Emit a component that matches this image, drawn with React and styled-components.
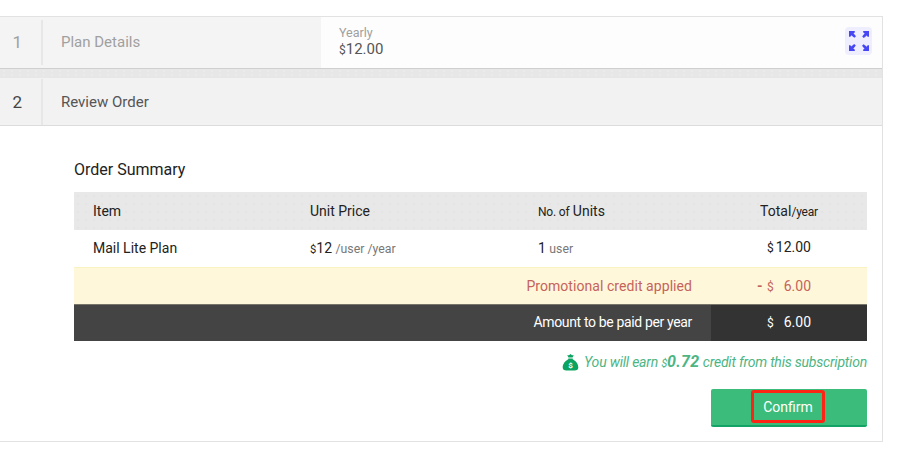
import React from 'react';
import styled, { createGlobalStyle, css } from 'styled-components';

const GlobalStyle = createGlobalStyle`
  * {
    box-sizing: border-box;
  }

  body {
    margin: 0;
    background: #fff;
    color: #222;
    font-family: Roboto, 'Liberation Sans', sans-serif;
    font-size: 14px;
  }
`;

export default function App() {
  return (
    <>
      <GlobalStyle />
      <Panel>
        <Step first>
          <StepNumber muted>1</StepNumber>
          <StepTitle muted>Plan Details</StepTitle>
          <PlanInfo>
            <PlanText>
              <Period>Yearly</Period>
              <Price><Currency>$</Currency>12.00</Price>
            </PlanText>
            <ExpandButton><ExpandIcon /></ExpandButton>
          </PlanInfo>
        </Step>
        <Gap />
        <Step>
          <StepNumber>2</StepNumber>
          <StepTitle>Review Order</StepTitle>
        </Step>
        <Content>
          <Heading>Order Summary</Heading>
          <Row head>
            <Cell>Item</Cell>
            <Cell>Unit Price</Cell>
            <Cell><Small>No. of</Small> Units</Cell>
            <TotalCell>Total<Small>/year</Small></TotalCell>
          </Row>
          <Row>
            <Cell>Mail Lite Plan</Cell>
            <Cell><Currency>$</Currency>12 <Unit>/user /year</Unit></Cell>
            <Cell>1 <Unit>user</Unit></Cell>
            <TotalCell><Sign>$</Sign><Amount>12.00</Amount></TotalCell>
          </Row>
          <Row promo>
            <LabelCell>Promotional credit applied</LabelCell>
            <TotalCell><Minus>-</Minus><Sign>$</Sign><Amount>6.00</Amount></TotalCell>
          </Row>
          <Row due>
            <LabelCell compact>Amount to be paid per year</LabelCell>
            <TotalCell dark><Sign>$</Sign><Amount>6.00</Amount></TotalCell>
          </Row>
          <Earning>
            <MoneyBag />
            <EarningText>
              You will earn <Currency>$</Currency><b>0.72</b> credit from this subscription
            </EarningText>
          </Earning>
          <ConfirmButton><Highlight>Confirm</Highlight></ConfirmButton>
        </Content>
      </Panel>
    </>
  );
}

function ExpandIcon() {
  return (
    <svg width="20" height="20" viewBox="0 0 20 20" fill="#4646f5">
      {[0, 90, 180, 270].map(angle => (
        <path
          key={angle}
          transform={`rotate(${angle} 10 10)`}
          d="M0 0h5.800v1.400L4.500 2.200 7 5.200 5.400 6.800 2.200 4.300 1.400 5.800H0z"
        />
      ))}
    </svg>
  );
}

function MoneyBag() {
  return (
    <svg width="17" height="17" viewBox="0 0 17 17">
      <path d="M5.200 1.200 7 1.300 8.500 0 10 1.300l1.800-.1-1.300 2.300h-4z" fill="#0ba360" />
      <path d="M6.300 4.400h4.400v.9c3 1.500 5.600 4.700 5.600 8 0 2.200-1.300 3.300-3.700 3.300H4.400C2 16.600.700 15.500.700 13.300c0-3.300 2.600-6.500 5.600-8z" fill="#0ba360" />
      <text x="8.500" y="13.800" textAnchor="middle" fontSize="8" fontWeight="700" fill="#fff">$</text>
    </svg>
  );
}

const Panel = styled.div`
  width: 883px;
  height: 426px;
  margin-top: 16px;
  border: solid #e2e2e2;
  border-width: 1px 1px 1px 0;
`;

const Step = styled.div.withConfig({ shouldForwardProp: p => p !== 'first' })`
  display: flex;
  align-items: stretch;
  height: ${p => (p.first ? 52 : 48)}px;
  padding: ${p => (p.first ? '3px 0' : '1px 0 0')};
  background: ${p => (p.first ? '#f4f4f4' : '#f2f2f2')};
  border-bottom: 1px solid ${p => (p.first ? '#cfcfcf' : '#dcdcdc')};
`;

const StepNumber = styled.div.withConfig({ shouldForwardProp: p => p !== 'muted' })`
  display: flex;
  align-items: center;
  width: 43px;
  padding-left: 12.500px;
  padding-bottom: ${p => (p.muted ? 2 : 0)}px;
  border-right: 2px solid #e7e7e7;
  color: ${p => (p.muted ? '#a0a0a0' : '#444')};
  font-size: 17px;
`;

const StepTitle = styled.div.withConfig({ shouldForwardProp: p => p !== 'muted' })`
  display: flex;
  align-items: center;
  width: 278px;
  padding-left: 18px;
  padding-bottom: ${p => (p.muted ? 2 : 0)}px;
  color: ${p => (p.muted ? '#a0a0a0' : '#555')};
  font-size: 15px;
`;

const PlanInfo = styled.div`
  display: flex;
  flex: 1;
  align-items: center;
  justify-content: space-between;
  margin: -3px 0;
  padding: 0 10px 0 18px;
  background: #fdfdfd;
`;

const PlanText = styled.div`
  padding-bottom: 3px;
  line-height: 16px;
`;

const Period = styled.div`
  color: #a0a0a0;
  font-size: 12.500px;
`;

const Price = styled.div`
  color: #555;
  font-size: 15px;
`;

const Currency = styled.span`
  font-size: 0.800em;
`;

const ExpandButton = styled.div`
  display: flex;
  align-items: center;
  justify-content: center;
  width: 27px;
  height: 28px;
  margin-bottom: 4px;
  border-radius: 4px;
  background: #eeeefe;
`;

const Gap = styled.div`
  height: 9px;
  background: radial-gradient(circle, #ececec 0.500px, transparent 1px) 0 0 / 8px 4px #e7e7e7;
`;

const Content = styled.div`
  display: flex;
  flex-direction: column;
  padding: 32px 15px 0 74px;
`;

const Heading = styled.div`
  height: 34px;
  font-size: 16px;
  line-height: 23px;
`;

const flags = ['head', 'promo', 'due', 'dark', 'compact'];

const Row = styled.div.withConfig({ shouldForwardProp: p => !flags.includes(p) })`
  display: grid;
  grid-template-columns: 217px 228px 192px 156px;
  width: 793px;
  height: 37px;
  line-height: 37px;

  ${p => p.head && css`
    height: 38px;
    line-height: 38px;
    background: radial-gradient(circle, #e0e0e0 0.500px, transparent 1px) 0 0 / 8px 8px #e8e8e8;
  `}

  ${p => p.promo && css`
    border-top: 1px solid #f8f3c0;
    background: #fff7d9;
    color: #c4635c;
  `}

  ${p => p.due && css`
    line-height: 35px;
    border-top: 1px solid #77746a;
    background: #444;
    color: #fff;
  `}
`;

const Cell = styled.div`
  padding-left: 19px;
  white-space: nowrap;
`;

const LabelCell = styled.div.withConfig({ shouldForwardProp: p => !flags.includes(p) })`
  grid-column: 1 / 4;
  padding-right: 19px;
  letter-spacing: ${p => (p.compact ? -0.350 : 0.060)}px;
  text-align: right;
`;

const TotalCell = styled.div.withConfig({ shouldForwardProp: p => !flags.includes(p) })`
  display: flex;
  align-items: baseline;
  justify-content: center;
  background: ${p => (p.dark ? '#333' : 'none')};
`;

const Small = styled.span`
  font-size: 12px;
  letter-spacing: -0.200px;
`;

const Unit = styled.span`
  color: #777;
  font-size: 12.300px;
`;

const Minus = styled.span`
  width: 10px;
  margin-left: -10px;
  font-weight: 700;
`;

const Sign = styled.span`
  width: 8px;
  font-size: 12px;
  line-height: 35px;
`;

const Amount = styled.span`
  width: 36px;
  line-height: 35px;
  text-align: right;
`;

const Earning = styled.div`
  display: flex;
  align-items: center;
  justify-content: flex-end;
  gap: 5px;
  height: 48px;
  padding-bottom: 8px;
  color: #4db584;

  svg {
    margin-top: 3px;
  }
`;

const EarningText = styled.span`
  font-size: 14px;
  font-style: italic;
  letter-spacing: -0.210px;
  white-space: nowrap;

  b {
    font-size: 16px;
    letter-spacing: 0.300px;
  }
`;

const ConfirmButton = styled.div`
  display: flex;
  align-items: center;
  justify-content: center;
  align-self: flex-end;
  width: 156px;
  height: 38px;
  padding: 0 2px 1px 0;
  border-bottom: 2px solid #13a366;
  border-radius: 2px;
  background: #3cbc7b;
  color: #fff;
`;

const Highlight = styled.span`
  width: 74px;
  height: 33px;
  border: 3px solid #fb2415;
  border-radius: 3px;
  line-height: 28px;
  text-align: center;
`;
